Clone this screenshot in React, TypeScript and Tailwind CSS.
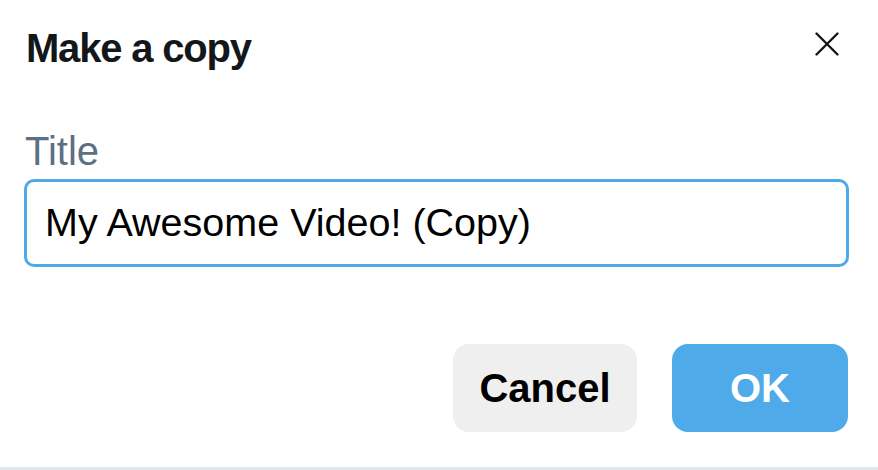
import React from "react";

export default function App() {
  return (
    <div
      className="w-[878px] h-[470px] bg-white flex flex-col border-b-[3px] border-[#e1e6ea] overflow-hidden"
      style={{ fontFamily: '"Liberation Sans", Arial, Helvetica, sans-serif' }}
    >
      <div className="flex items-start justify-between pl-[26px] pr-[38px] pt-[26px]">
        <h1 className="text-[40px] leading-[44px] font-bold text-[#14171a] tracking-[-1.2px]">
          Make a copy
        </h1>
        <button className="mt-[5px] w-[26px] h-[26px] flex items-center justify-center">
          <svg width="26" height="26" viewBox="0 0 26 26" fill="none">
            <path d="M2.5 2.5 L23.5 23.5 M23.5 2.5 L2.5 23.5" stroke="#14171a" strokeWidth="2.4" strokeLinecap="round" />
          </svg>
        </button>
      </div>
      <div className="pl-[24px] pr-[29px] mt-[59px]">
        <label className="block text-[40px] leading-[44px] text-[#5b7083] pl-[1px]">Title</label>
        <div className="mt-[6px] h-[88px] border-[3px] border-[#4eaae8] rounded-[10px] flex items-center pl-[18px] text-[39.5px] text-black">
          My Awesome Video! (Copy)
        </div>
      </div>
      <div className="flex justify-end gap-[35px] pr-[30px] mt-[77px]">
        <button className="w-[184px] h-[88px] rounded-[16px] bg-[#efefef] text-[40px] font-bold text-black">
          Cancel
        </button>
        <button className="w-[176px] h-[88px] rounded-[16px] bg-[#4eaae8] text-[40px] font-bold text-white">
          OK
        </button>
      </div>
    </div>
  );
}
